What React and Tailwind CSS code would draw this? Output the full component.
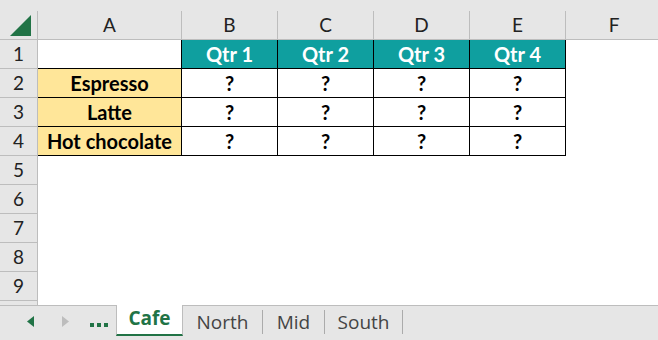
const cols = ['A', 'B', 'C', 'D', 'E', 'F']
const items = ['Espresso', 'Latte', 'Hot chocolate']
const sheetFont = { fontFamily: 'Lato, "Open Sans", sans-serif' }

function RowHead({ n }) {
  return (
    <div className="flex h-[29px] w-[38px] shrink-0 items-center justify-center border-r border-b border-[#bdbdbd] bg-[#e6e6e6] text-[19px] text-[#222]">
      {n}
    </div>
  )
}

function Cell({ className = '', children }) {
  return (
    <div className={`flex h-[29px] shrink-0 items-center justify-center border-r border-b border-black text-[20px] font-bold ${className}`}>
      {children}
    </div>
  )
}

export default function App() {
  return (
    <div className="flex h-[340px] w-[658px] flex-col overflow-hidden bg-[#e6e6e6]" style={sheetFont}>
      <div className="h-[11px] shrink-0 bg-[#e6e6e6]" />

      {/* column letters */}
      <div className="flex h-[29px] shrink-0 bg-[#e6e6e6]">
        <div className="flex w-[38px] shrink-0 items-end justify-center border-r border-b border-[#bdbdbd] pb-[3px] pl-[4px]">
          <svg width="21" height="21" viewBox="0 0 21 21">
            <polygon points="21,0 21,21 0,21" fill="#217346" />
          </svg>
        </div>
        <div className="flex h-[29px] w-[144px] shrink-0 items-center justify-center border-r border-b border-[#bdbdbd] text-[19px] text-[#222]">A</div>
        {cols.slice(1).map((c) => (
          <div key={c} className="flex h-[29px] w-[96px] shrink-0 items-center justify-center border-r border-b border-[#bdbdbd] text-[19px] text-[#222] last:border-r-0">
            {c}
          </div>
        ))}
      </div>

      <div className="flex shrink-0 flex-col bg-white">
        {/* row 1 */}
        <div className="flex">
          <RowHead n={1} />
          <Cell className="w-[144px] bg-white" />
          {[1, 2, 3, 4].map((q) => (
            <Cell key={q} className="w-[96px] bg-[#0f9f9f] text-white">Qtr {q}</Cell>
          ))}
        </div>

        {items.map((name, i) => (
          <div key={name} className="flex">
            <RowHead n={i + 2} />
            <Cell className="w-[144px] bg-[#ffe699] text-black">{name}</Cell>
            {[1, 2, 3, 4].map((q) => (
              <Cell key={q} className="w-[96px] bg-white text-black">?</Cell>
            ))}
          </div>
        ))}

        {[5, 6, 7, 8, 9, 10].map((n) => (
          <div key={n} className="flex">
            <RowHead n={n} />
          </div>
        ))}
      </div>

      {/* sheet tabs */}
      <div className="relative z-10 -mt-[25px] flex h-[35px] shrink-0 items-stretch border-t border-[#bdbdbd] bg-[#e6e6e6]" style={{ fontFamily: '"Open Sans", "Noto Sans", sans-serif' }}>
        <div className="flex w-[116px] shrink-0 items-center pb-[4px]">
          <svg className="ml-[27px]" width="7" height="11" viewBox="0 0 7 11">
            <polygon points="7,0 7,11 0,5.5" fill="#217346" />
          </svg>
          <svg className="ml-[28px]" width="7" height="11" viewBox="0 0 7 11">
            <polygon points="0,0 0,11 7,5.5" fill="#bdbdbd" />
          </svg>
          <div className="ml-[21px] flex gap-[3px] pt-[8px]">
            <span className="h-[4px] w-[4px] bg-[#217346]" />
            <span className="h-[4px] w-[4px] bg-[#217346]" />
            <span className="h-[4px] w-[4px] bg-[#217346]" />
          </div>
        </div>
        <div className="-mt-px flex h-[31px] w-[67px] shrink-0 items-center justify-center border-x border-[#bdbdbd] border-b-2 border-b-[#217346] bg-white pb-[2px] text-[19px] font-bold text-[#217346]">
          Cafe
        </div>
        <div className="mt-[4px] mb-[6px] flex w-[80px] items-center justify-center border-r border-[#ababab] text-[19px] text-[#444]">North</div>
        <div className="mt-[4px] mb-[6px] flex w-[62px] items-center justify-center border-r border-[#ababab] text-[19px] text-[#444]">Mid</div>
        <div className="mt-[4px] mb-[6px] flex w-[78px] items-center justify-center border-r border-[#ababab] text-[19px] text-[#444]">South</div>
      </div>
    </div>
  )
}
